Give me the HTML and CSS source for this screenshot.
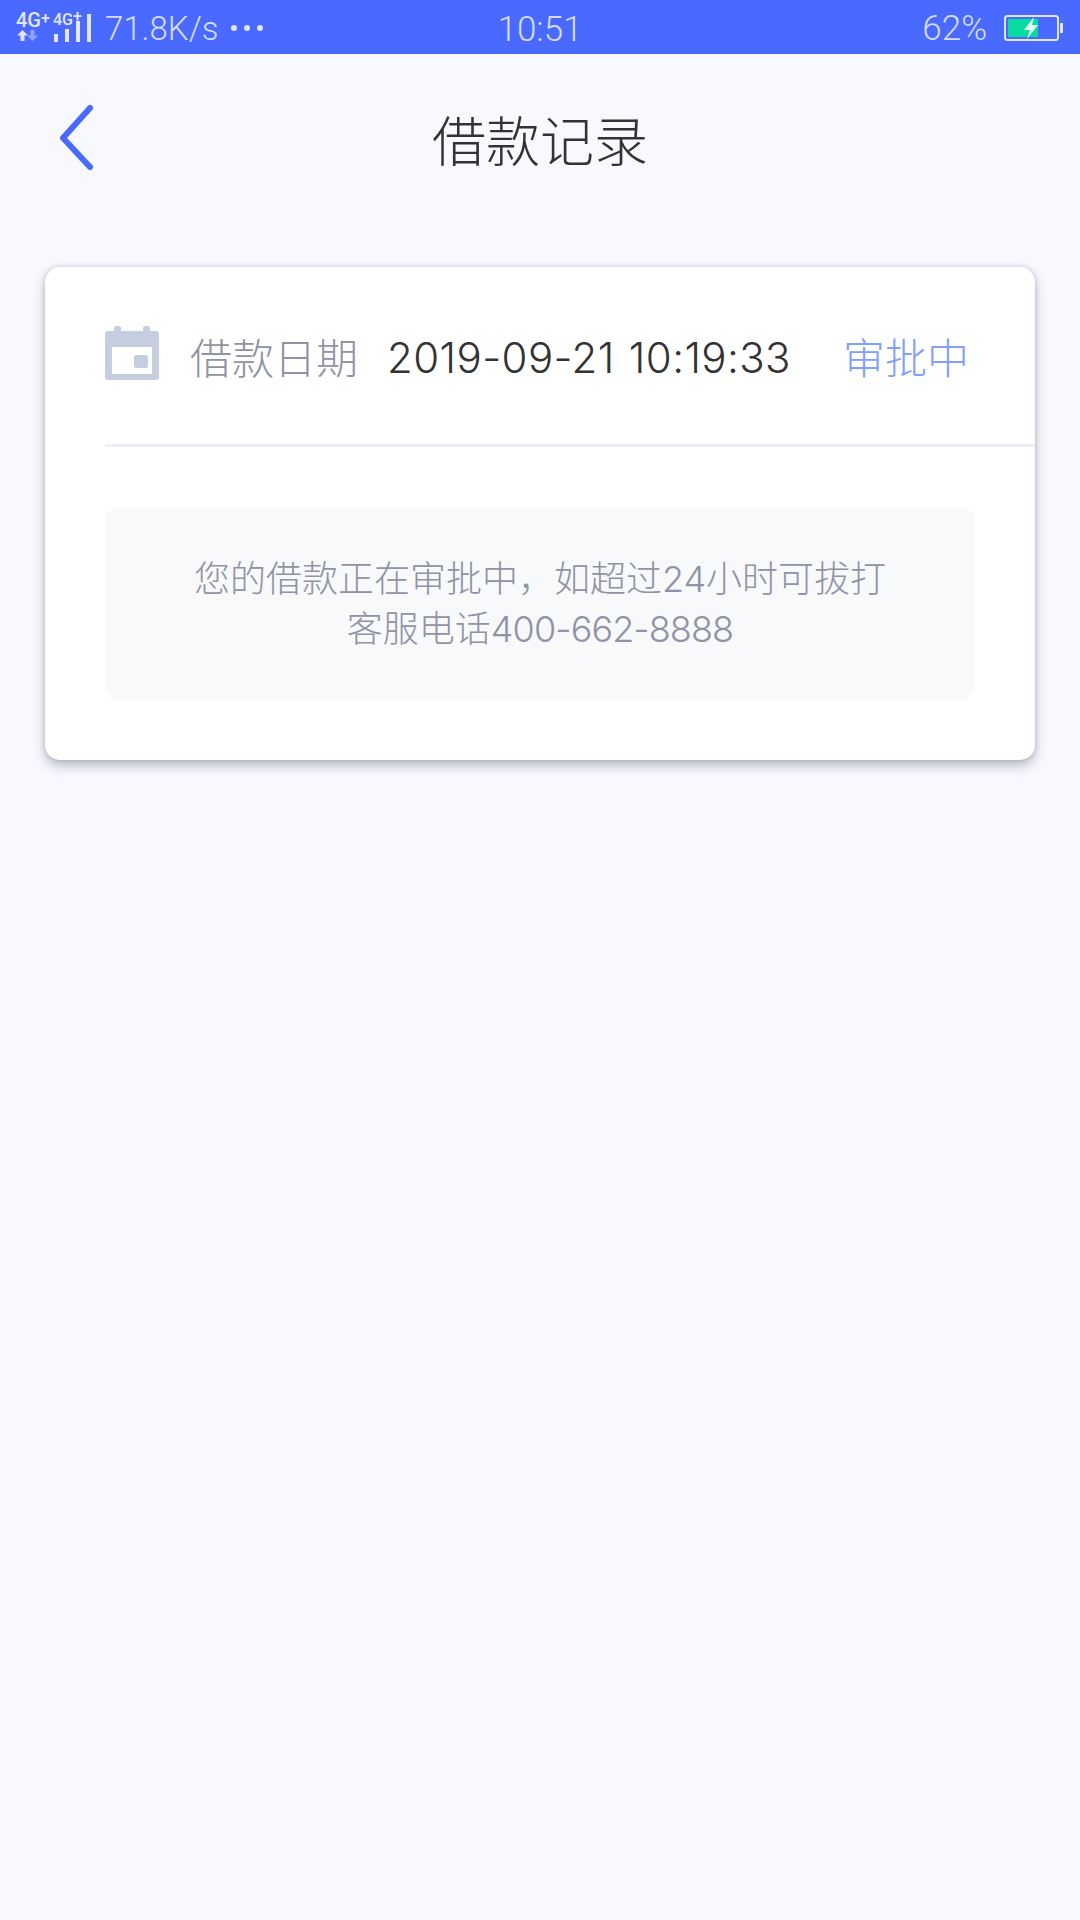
FILE: index.html
```html
<!DOCTYPE html>
<html lang="zh-CN">
<head>
    <meta charset="UTF-8">
    <meta name="viewport" content="width=device-width, initial-scale=1.0">
    <title>借款记录</title>
    <link rel="stylesheet" href="styles.css">
</head>
<body>
    <div class="status-bar">
        <div class="status-left">
            <div class="net net-one">
                <span class="net-label">4G<sup>+</sup></span>
                <svg class="net-arrows" width="24" height="11" viewBox="0 0 24 11">
                    <path d="M6.500 0 L12 5.500 H8.500 V11 H4.500 V5.500 H1 Z" fill="#e2e7ff"/>
                    <path d="M16.500 11 L11 5.500 H14.500 V0 H18.500 V5.500 H22 Z" fill="#8fa4ff"/>
                </svg>
            </div>
            <div class="net net-two">
                <span class="net-label net-label-small">4G<sup>+</sup></span>
            </div>
            <svg class="signal" width="38" height="28" viewBox="0 0 38 28">
                <rect x="0" y="20" width="4" height="8" fill="#e2e7ff"/>
                <rect x="11" y="15" width="4" height="13" fill="#e2e7ff"/>
                <rect x="22" y="7" width="4" height="21" fill="#e2e7ff"/>
                <rect x="33" y="0" width="4" height="28" fill="#e2e7ff"/>
            </svg>
            <span class="speed">71.8K/s</span>
            <span class="dots"><i></i><i></i><i></i></span>
        </div>
        <div class="status-time">10:51</div>
        <div class="status-right">
            <span class="percent">62%</span>
            <svg class="battery" width="60" height="26" viewBox="0 0 60 26">
                <rect x="1" y="1" width="53" height="24" rx="2.500" fill="none" stroke="#dfe4ff" stroke-width="2"/>
                <rect x="4" y="4" width="30" height="18" fill="#06dba0"/>
                <rect x="56" y="8" width="3" height="10" fill="#dfe4ff"/>
                <path d="M30 2 L20 15 H26 L23 24 L34 10 H28 Z" fill="#e6fff6"/>
            </svg>
        </div>
    </div>

    <header class="nav">
        <svg class="back" width="36" height="68" viewBox="0 0 36 68">
            <path d="M32 4 L5 34 L32 63" fill="none" stroke="#4a6aff" stroke-width="6" stroke-linecap="round" stroke-linejoin="round"/>
        </svg>
        <h1>借款记录</h1>
    </header>

    <section class="card">
        <div class="card-head">
            <svg class="calendar" width="54" height="54" viewBox="0 0 54 54">
                <path d="M3 5 H9 V2 Q9 0 11 0 H14 Q16 0 16 2 V5 H38 V2 Q38 0 40 0 H43 Q45 0 45 2 V5 H51 Q54 5 54 8 V51 Q54 54 51 54 H3 Q0 54 0 51 V8 Q0 5 3 5 Z" fill="#c5cddf"/>
                <rect x="7" y="21" width="40" height="27" fill="#fff"/>
                <rect x="29" y="29" width="14" height="13" rx="2" fill="#c5cddf"/>
            </svg>
            <span class="date-label">借款日期</span>
            <span class="date-value">2019-09-21 10:19:33</span>
            <span class="state">审批中</span>
        </div>
        <div class="notice">
            <p>您的借款正在审批中，如超过24小时可拔打</p>
            <p>客服电话<span class="phone">400-662-8888</span></p>
        </div>
    </section>
</body>
</html>
```

FILE: styles.css
```css
* {
    box-sizing: border-box;
}
body {
    margin: 0;
    height: 1920px;
    overflow: hidden;
    background-color: #f8f9fe;
    font-family: Inter, "Noto Sans CJK SC", sans-serif;
    font-weight: 300;
}
.status-bar {
    height: 54px;
    background-color: #4a6aff;
    color: #d5dcff;
    display: grid;
    grid-template-columns: 1fr auto 1fr;
    align-items: center;
    padding: 2px 16px 0;
    font-family: Roboto, sans-serif;
    font-weight: 300;
}
.status-left {
    display: flex;
    align-items: center;
}
.net {
    display: flex;
    flex-direction: column;
    align-items: flex-start;
    height: 34px;
}
.net-one {
    width: 37px;
}
.net-two {
    width: 37px;
}
.net-label {
    font-size: 20px;
    line-height: 18px;
    font-weight: 500;
    color: #e2e7ff;
    white-space: nowrap;
}
.net-label-small {
    font-size: 16px;
}
.net-label sup {
    font-size: 16px;
    line-height: 0;
    vertical-align: 3px;
}
.net-arrows {
    margin-top: 1px;
}
.signal {
    margin-left: -36px;
}
.speed {
    margin-left: 13px;
    font-size: 33px;
}
.dots {
    display: flex;
    gap: 7px;
    margin-left: 12px;
}
.dots i {
    width: 6px;
    height: 6px;
    border-radius: 50%;
    background-color: #dfe4ff;
}
.status-time {
    font-size: 35px;
    text-align: center;
    padding-top: 2px;
}
.status-right {
    display: flex;
    justify-content: flex-end;
    align-items: center;
    gap: 17px;
}
.percent {
    font-size: 35px;
}
.nav {
    height: 143px;
    padding-top: 26px;
    position: relative;
    display: flex;
    justify-content: center;
    align-items: center;
}
.nav h1 {
    margin: 0;
    font-size: 54px;
    font-weight: 300;
    color: #333;
}
.back {
    position: absolute;
    left: 58px;
    top: 50px;
}
.card {
    margin: 70px 45px 0;
    height: 493px;
    background-color: #fff;
    border-radius: 15px;
    box-shadow: 0 6px 12px rgba(60, 65, 90, 0.32), 0 0 5px rgba(60, 65, 90, 0.22);
    padding-left: 60px;
}
.card-head {
    height: 180px;
    display: flex;
    align-items: center;
    border-bottom: 3px solid #eeeff6;
    font-size: 42px;
}
.calendar {
    flex: none;
    margin-top: -6px;
}
.date-label {
    margin-left: 31px;
    color: #9092a6;
}
.date-value {
    margin-left: 29px;
    margin-top: 4px;
    color: #333;
    letter-spacing: 0.4px;
    word-spacing: 2px;
}
.state {
    margin-left: 52px;
    color: #7fa0ff;
}
.notice {
    width: 870px;
    height: 193px;
    margin-top: 60px;
    background-color: #f8f9fb;
    border-radius: 15px;
    display: flex;
    flex-direction: column;
    justify-content: center;
    align-items: center;
    font-size: 36px;
    line-height: 50px;
    color: #9092a6;
}
.notice p {
    margin: 0;
}
.phone {
    letter-spacing: -0.9px;
}
```
